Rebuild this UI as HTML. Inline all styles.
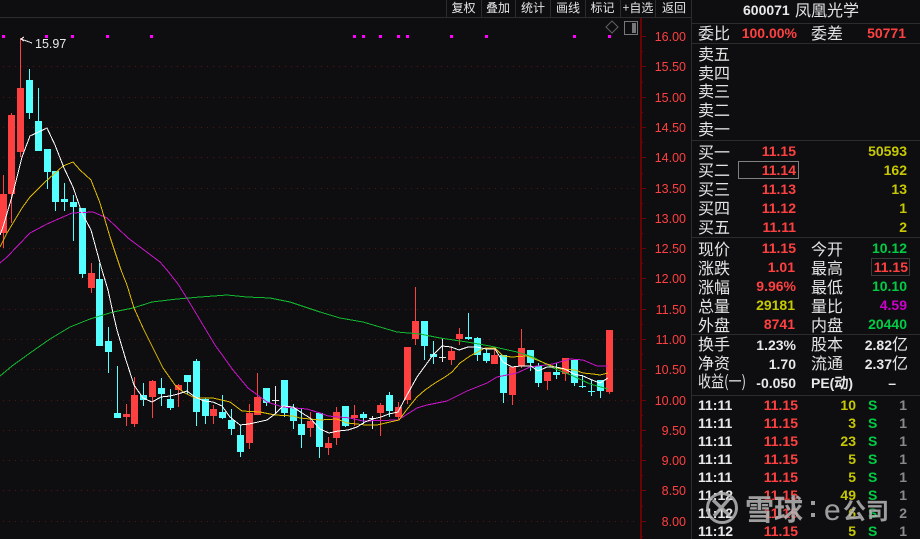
<!DOCTYPE html>
<html><head><meta charset="utf-8">
<style>
html,body{margin:0;padding:0;background:#0e0e11;width:920px;height:539px;overflow:hidden}
svg{display:block}
text{font-family:"Liberation Sans","WenQuanYi Zen Hei",sans-serif}
.c{font-family:"WenQuanYi Zen Hei","Noto Sans CJK SC",sans-serif;font-size:16px;fill:#e4e4e4}
.t{font-family:"WenQuanYi Zen Hei","Noto Sans CJK SC",sans-serif;font-size:12px;fill:#e4e4e4;text-anchor:middle}
.n{font-size:14px;font-weight:bold;text-anchor:end}
.a{font-size:12.5px;fill:#ff4040;text-anchor:end}
.r{fill:#ff4040}.y{fill:#c8c800}.g{fill:#00cc44}.w{fill:#e8e8e8}.p{fill:#cc00cc}.s{fill:#8a8a8a}
.m{fill:#b8b8b8;stroke:#1c1c1c;stroke-width:.6px;paint-order:stroke;font-weight:bold;font-family:"Noto Sans CJK SC",sans-serif}
</style></head><body>
<svg width="920" height="539" viewBox="0 0 920 539" xmlns="http://www.w3.org/2000/svg">
<rect width="920" height="539" fill="#0e0e11"/>
<g shape-rendering="crispEdges">
<path d="M0 17.5H691M446.5 0V17M481.5 0V17M515.5 0V17M550.5 0V17M585.5 0V17M620.5 0V17M655.5 0V17M691.5 0V539M692 23.5H920M692 43.5H920M692 140.5H920M692 237.5H920M692 334.5H920M692 395.5H920" stroke="#2c2c2e" fill="none"/>
<path d="M3 66H638M3 97H638M3 127H638M3 157H638M3 188H638M3 218H638M3 248H638M3 278H638M3 309H638M3 339H638M3 369H638M3 400H638M3 430H638M3 460H638M3 490H638M3 521H638" stroke="#5a1212" stroke-dasharray="1 5" fill="none" transform="translate(0 .5)"/>
<path d="M640.5 18V539M640 36.5h6M640 66.5h6M640 97.5h6M640 127.5h6M640 157.5h6M640 188.5h6M640 218.5h6M640 248.5h6M640 278.5h6M640 309.5h6M640 339.5h6M640 369.5h6M640 400.5h6M640 430.5h6M640 460.5h6M640 490.5h6M640 521.5h6M640 51.5h3M640 82.5h3M640 112.5h3M640 142.5h3M640 173.5h3M640 203.5h3M640 233.5h3M640 263.5h3M640 294.5h3M640 324.5h3M640 354.5h3M640 385.5h3M640 415.5h3M640 445.5h3M640 475.5h3M640 506.5h3M640 536.5h3" stroke="#6a0404" fill="none"/>
<path d="M641.5 18V539" stroke="#6a0404"/>
<path fill="#f0f" d="M2 35h3v3h-3zM45 35h3v3h-3zM71 35h3v3h-3zM106 35h3v3h-3zM150 35h3v3h-3zM353 35h3v3h-3zM362 35h3v3h-3zM379 35h3v3h-3zM397 35h3v3h-3zM406 35h3v3h-3zM450 35h3v3h-3zM485 35h3v3h-3zM573 35h3v3h-3zM608 35h3v3h-3z"/>
<path stroke="#ff4040" fill="none" d="M3.5 175V248M11.5 113V223M20.5 38V157M91.5 263V293M126.5 404V426M134.5 377V427M152.5 380V418M178.5 384V407M213.5 405V424M249.5 404V449M257.5 373V415M310.5 412V437M328.5 437V455M336.5 407V445M354.5 405V426M380.5 403V436M398.5 402V419M407.5 347V404M415.5 287V345M451.5 347V365M459.5 328V345M494.5 349V364M512.5 367V405M521.5 329V368M547.5 372V390M565.5 358V381M609.5 330V394"/>
<path fill="#ff4040" d="M0 194h7v39h-7zM8 115h7v79h-7zM17 88h7v64h-7zM88 273h7v15h-7zM123 414h7v3h-7zM131 395h7v29h-7zM149 381h7v16h-7zM175 385h7v5h-7zM210 409h7v7h-7zM246 413h7v30h-7zM254 397h7v18h-7zM307 421h7v7h-7zM325 443h7v5h-7zM333 412h7v26h-7zM351 415h7v3h-7zM377 405h7v8h-7zM395 407h7v10h-7zM404 347h7v53h-7zM412 321h7v18h-7zM448 351h7v9h-7zM456 334h7v5h-7zM491 355h7v9h-7zM509 367h7v28h-7zM518 348h7v18h-7zM544 372h7v9h-7zM562 358h7v16h-7zM606 330h7v62h-7z"/>
<path stroke="#54ffff" fill="none" d="M29.5 69V119M38.5 88V151M47.5 149V189M55.5 171V211M64.5 183V211M73.5 195V241M82.5 208V278M99.5 263V346M108.5 327V373M117.5 366V418M143.5 383V406M161.5 378V406M170.5 389V410M187.5 375V394M196.5 359V426M205.5 398V424M222.5 395V419M231.5 409V435M240.5 425V457M266.5 388V406M284.5 380V417M293.5 404V429M301.5 409V448M319.5 413V458M345.5 406V427M363.5 412V424M389.5 392V417M424.5 321V360M433.5 341V364M468.5 313V340M477.5 337V361M486.5 348V363M503.5 355V403M530.5 350V371M538.5 363V387M556.5 363V379M574.5 360V386M582.5 375V388M591.5 380V396M600.5 380V398"/>
<path fill="#54ffff" d="M26 80h7v33h-7zM35 121h7v30h-7zM44 149h7v23h-7zM52 171h7v31h-7zM61 199h7v3h-7zM70 202h7v5h-7zM79 208h7v66h-7zM96 279h7v67h-7zM105 341h7v11h-7zM114 413h7v5h-7zM140 395h7v5h-7zM158 388h7v6h-7zM167 399h7v9h-7zM184 375h7v7h-7zM193 361h7v51h-7zM202 399h7v17h-7zM219 412h7v6h-7zM228 420h7v9h-7zM237 435h7v17h-7zM263 388h7v15h-7zM281 380h7v33h-7zM290 408h7v13h-7zM298 424h7v11h-7zM316 413h7v34h-7zM342 406h7v20h-7zM360 414h7v4h-7zM386 395h7v16h-7zM421 321h7v25h-7zM430 354h7v3h-7zM465 337h7v2h-7zM474 338h7v17h-7zM483 353h7v8h-7zM500 355h7v38h-7zM527 350h7v13h-7zM535 366h7v17h-7zM553 372h7v3h-7zM571 360h7v23h-7zM579 386h7v1h-7zM588 391h7v1h-7zM597 380h7v11h-7z"/>
<path stroke="#e8e8e8" fill="none" d="M275.5 386V414M272 400.5h7M372.5 416V429M369 418.5h7M442.5 339V362M439 357.5h7"/>
<rect x="738.5" y="161.5" width="60" height="17" fill="none" stroke="#808080"/>
<rect x="871.5" y="258.5" width="38" height="17" fill="none" stroke="#3a3a3a"/>
<rect x="624.5" y="21.5" width="13" height="13" fill="none" stroke="#777"/>
<rect x="632" y="23" width="4" height="10" fill="#777"/>
</g>
<g fill="none" stroke-width="1" shape-rendering="crispEdges">
<polyline stroke="#12b82e" points="0,376 12,366 30,353 50,339 70,327 90,319 113,312 133,308 152,302 177,299 200,297 227,295 247,297 270,298 290,302 320,312 340,318 363,322 397,332 420,334 440,338 467,342 490,346 517,352 533,357 553,368 573,376 590,384 608,389"/>
<polyline stroke="#cc14cc" points="0,263 7,257 30,233 47,224 72,213 93,212 107,218 128,238 160,262 167,270 178,284 188,300 203,325 215,345 233,370 248,388 267,402 283,407 307,409 320,413 328,416 350,418 363,421 398,420 417,408 427,405 447,401 467,391 487,383 497,377 517,373 530,367 553,364 570,359 583,360 597,366 608,366"/>
<polyline stroke="#e0bc00" points="0,247 7,233 22,208 30,197 45,182 63,166 73,162 80,170 91,180 100,203 110,237 121,270 127,285 134,308 143,328 153,348 163,368 175,385 183,392 195,398 213,398 230,402 242,411 260,412 275,415 293,416 300,418 320,420 337,419 347,423 357,424 365,425 377,425 390,422 399,420 408,408 417,397 425,390 435,383 445,377 452,372 460,363 470,356 485,348 495,348 503,356 512,357 527,356 537,360 547,364 560,369 575,370 583,373 593,374 600,375 608,373"/>
<polyline stroke="#ffffff" points="0,235 3,227 13,193 22,157 30,136 47,128 55,145 64,168 73,187 82,213 91,230 100,263 102,270 108,290 113,313 117,330 125,357 134,385 143,398 152,402 161,397 170,396 178,394 187,391 195,397 204,401 213,402 222,406 230,417 240,425 249,424 258,422 267,420 275,414 283,406 293,407 302,413 310,418 320,429 329,433 338,431 348,430 357,427 365,422 373,419 381,417 389,414 398,412 407,395 417,377 425,366 433,355 442,346 451,347 459,350 468,347 477,347 486,349 495,349 503,362 512,367 521,366 531,366 538,371 547,367 556,367 565,369 574,374 583,376 592,380 600,383 608,378"/>
<path stroke="#e8e8e8" d="M24 37L21 39L32 43M21 39L24 41"/>
<path stroke="#5c5c5c" d="M612 21L618 27L612 33L606 27Z"/>
</g>
<text x="35" y="48" font-size="12.500" fill="#e8e8e8">15.97</text>

<text class="t" x="463.500" y="12">复权</text><text class="t" x="498" y="12">叠加</text><text class="t" x="533" y="12">统计</text><text class="t" x="568" y="12">画线</text><text class="t" x="602.500" y="12">标记</text><text class="t" x="638" y="12">+自选</text><text class="t" x="674" y="12">返回</text>

<text class="a" x="686" y="41">16.00</text><text class="a" x="686" y="71">15.50</text><text class="a" x="686" y="102">15.00</text><text class="a" x="686" y="132">14.50</text><text class="a" x="686" y="162">14.00</text><text class="a" x="686" y="193">13.50</text><text class="a" x="686" y="223">13.00</text><text class="a" x="686" y="253">12.50</text><text class="a" x="686" y="283">12.00</text><text class="a" x="686" y="314">11.50</text><text class="a" x="686" y="344">11.00</text><text class="a" x="686" y="374">10.50</text><text class="a" x="686" y="405">10.00</text><text class="a" x="686" y="435">9.50</text><text class="a" x="686" y="465">9.00</text><text class="a" x="686" y="495">8.50</text><text class="a" x="686" y="526">8.00</text>

<text x="743" y="15" font-size="14" font-weight="bold" fill="#e8e8e8">600071</text>
<text class="c" x="795" y="16">凤凰光学</text>

<text class="c" x="698" y="39">委比</text><text class="n r" x="797" y="38">100.00%</text><text class="c" x="811" y="39">委差</text><text class="n r" x="906" y="38">50771</text>
<text class="c" x="698" y="60">卖五</text><text class="c" x="698" y="79">卖四</text><text class="c" x="698" y="97">卖三</text><text class="c" x="698" y="116">卖二</text><text class="c" x="698" y="135">卖一</text>

<text class="c" x="698" y="158">买一</text><text class="n r" x="796" y="156">11.15</text><text class="n y" x="907" y="156">50593</text>
<text class="c" x="698" y="176">买二</text><text class="n r" x="796" y="175">11.14</text><text class="n y" x="907" y="175">162</text>
<text class="c" x="698" y="195">买三</text><text class="n r" x="796" y="194">11.13</text><text class="n y" x="907" y="194">13</text>
<text class="c" x="698" y="214">买四</text><text class="n r" x="796" y="213">11.12</text><text class="n y" x="907" y="213">1</text>
<text class="c" x="698" y="233">买五</text><text class="n r" x="796" y="232">11.11</text><text class="n y" x="907" y="232">2</text>

<text class="c" x="698" y="255">现价</text><text class="n r" x="796" y="253">11.15</text><text class="c" x="811" y="255">今开</text><text class="n g" x="907" y="253">10.12</text>
<text class="c" x="698" y="274">涨跌</text><text class="n r" x="795" y="272">1.01</text><text class="c" x="811" y="274">最高</text><text class="n r" x="908" y="272">11.15</text>
<text class="c" x="698" y="293">涨幅</text><text class="n r" x="796" y="291">9.96%</text><text class="c" x="811" y="293">最低</text><text class="n g" x="907" y="291">10.10</text>
<text class="c" x="698" y="312">总量</text><text class="n y" x="795" y="310">29181</text><text class="c" x="811" y="312">量比</text><text class="n p" x="907" y="310">4.59</text>
<text class="c" x="698" y="331">外盘</text><text class="n r" x="795" y="329">8741</text><text class="c" x="811" y="331">内盘</text><text class="n g" x="907" y="329">20440</text>

<text class="c" x="698" y="350">换手</text><text class="n w" x="796" y="350">1.23%</text><text class="c" x="811" y="350">股本</text><text class="n w" x="892" y="350">2.82</text><text class="c" x="892" y="350">亿</text>
<text class="c" x="698" y="369">净资</text><text class="n w" x="796" y="369">1.70</text><text class="c" x="811" y="369">流通</text><text class="n w" x="892" y="369">2.37</text><text class="c" x="892" y="369">亿</text>
<text class="c" x="698" y="387" textLength="48" lengthAdjust="spacingAndGlyphs">收益(一)</text><text class="n w" x="796" y="388">-0.050</text><text x="811" y="388" font-size="14" font-weight="bold" fill="#e8e8e8">PE(动)</text><text class="n w" x="896" y="388">–</text>

<text class="n w" x="698" y="410" style="text-anchor:start">11:11</text><text class="n r" x="798" y="410">11.15</text><text class="n y" x="856" y="410">10</text><text class="n g" x="868" y="410" style="text-anchor:start">S</text><text class="n s" x="907" y="410">1</text>
<text class="n w" x="698" y="428" style="text-anchor:start">11:11</text><text class="n r" x="798" y="428">11.15</text><text class="n y" x="856" y="428">3</text><text class="n g" x="868" y="428" style="text-anchor:start">S</text><text class="n s" x="907" y="428">1</text>
<text class="n w" x="698" y="446" style="text-anchor:start">11:11</text><text class="n r" x="798" y="446">11.15</text><text class="n y" x="856" y="446">23</text><text class="n g" x="868" y="446" style="text-anchor:start">S</text><text class="n s" x="907" y="446">1</text>
<text class="n w" x="698" y="464" style="text-anchor:start">11:11</text><text class="n r" x="798" y="464">11.15</text><text class="n y" x="856" y="464">5</text><text class="n g" x="868" y="464" style="text-anchor:start">S</text><text class="n s" x="907" y="464">1</text>
<text class="n w" x="698" y="482" style="text-anchor:start">11:11</text><text class="n r" x="798" y="482">11.15</text><text class="n y" x="856" y="482">5</text><text class="n g" x="868" y="482" style="text-anchor:start">S</text><text class="n s" x="907" y="482">1</text>
<text class="n w" x="698" y="500" style="text-anchor:start">11:12</text><text class="n r" x="798" y="500">11.15</text><text class="n y" x="856" y="500">49</text><text class="n g" x="868" y="500" style="text-anchor:start">S</text><text class="n s" x="907" y="500">1</text>
<text class="n w" x="698" y="518" style="text-anchor:start">11:12</text><text class="n r" x="798" y="518">11.15</text><text class="n y" x="856" y="518">6</text><text class="n g" x="868" y="518" style="text-anchor:start">S</text><text class="n s" x="907" y="518">2</text>
<text class="n w" x="698" y="536" style="text-anchor:start">11:12</text><text class="n r" x="798" y="536">11.15</text><text class="n y" x="856" y="536">5</text><text class="n g" x="868" y="536" style="text-anchor:start">S</text><text class="n s" x="907" y="536">1</text>

<g opacity=".85">
<circle cx="722" cy="508" r="14.500" fill="none" stroke="#b8b8b8" stroke-width="3"/>
<path d="M713 500L730 516M729 499L714 516" fill="none" stroke="#b8b8b8" stroke-width="3.500"/>
<text class="m" x="745" y="520" font-size="29">雪球</text>
<path d="M811 501h4v4h-4zM811 513h4v4h-4z" fill="#b8b8b8"/>
<text class="m" x="824" y="520" font-size="30" style="font-family:'Liberation Sans',sans-serif;font-weight:normal">e</text>
<text class="m" x="843" y="519" font-size="23">公司</text>
</g>
</svg>
</body></html>
